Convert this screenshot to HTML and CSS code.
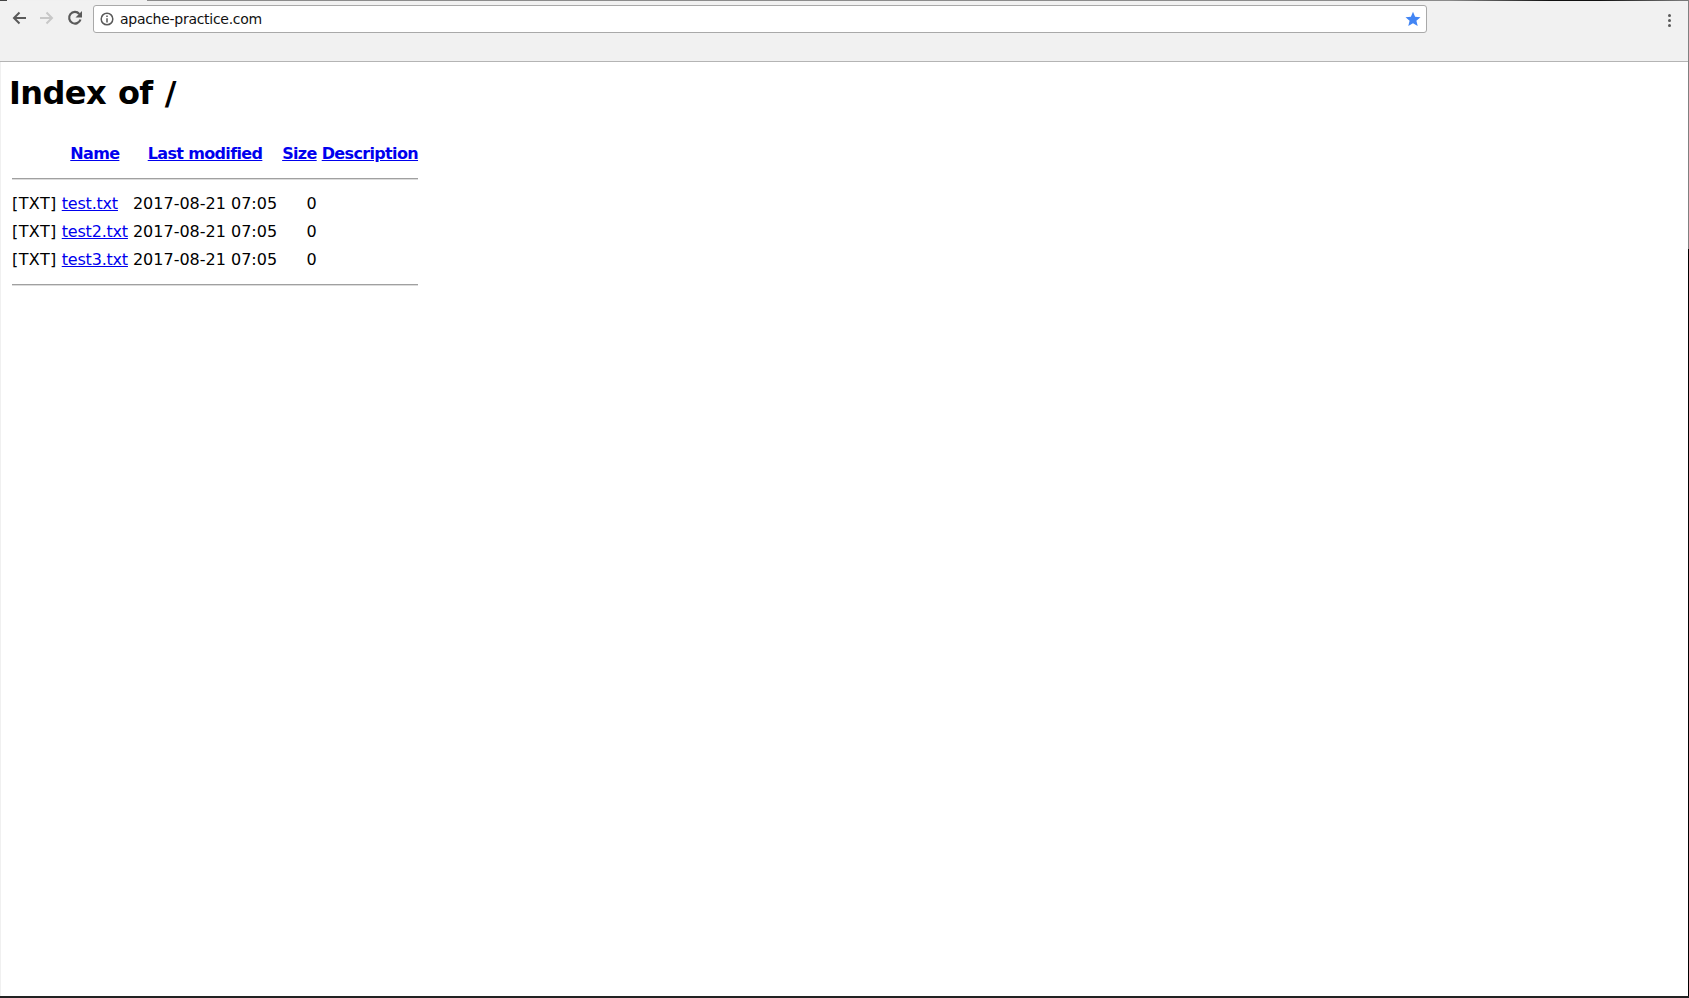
FILE: index.html
```html
<!DOCTYPE html>
<html lang="en">
<head>
    <meta charset="UTF-8">
    <meta name="viewport" content="width=device-width, initial-scale=1.0">
    <title>Index of /</title>
    <link rel="stylesheet" href="styles.css">
</head>
<body>
    <div class="window">
        <div class="top-edge"></div>
        <div class="toolbar">
            <div class="nav-buttons">
                <svg class="nav-icon" viewBox="0 0 16 16"><path d="M15 8H3M8.500 2.500 3 8l5.500 5.500" fill="none" stroke="#5a5a5a" stroke-width="2"/></svg>
                <svg class="nav-icon" viewBox="0 0 16 16"><path d="M1 8h12M7.500 2.500 13 8l-5.500 5.500" fill="none" stroke="#c8c8c8" stroke-width="2"/></svg>
                <svg class="nav-icon" viewBox="0 0 16 16"><path d="M13.500 9.500A5.800 5.800 0 1 1 12.300 3.900" fill="none" stroke="#5a5a5a" stroke-width="2.200"/><path d="M15 1v6.500H8.500z" fill="#5a5a5a"/></svg>
            </div>
            <div class="address-bar">
                <svg class="info-icon" viewBox="0 0 14 14"><circle cx="7" cy="7" r="5.800" fill="none" stroke="#5a5a5a" stroke-width="1.500"/><path d="M7 6.200v4.300M7 3.500v1.500" stroke="#5a5a5a" stroke-width="1.500"/></svg>
                <span class="url">apache-practice.com</span>
                <svg class="star-icon" viewBox="0 0 16 16"><path d="M8 .8l2.100 5 5.400.4-4.100 3.500 1.300 5.300L8 12.200 3.300 15l1.300-5.300L.5 6.200l5.400-.4z" fill="#4285f4"/></svg>
            </div>
            <div class="menu-dots"><span></span><span></span><span></span></div>
        </div>
        <div class="content">
            <h1>Index of /</h1>
            <table>
                <tr class="head-row">
                    <th></th>
                    <th><a href="#">Name</a></th>
                    <th><a href="#">Last modified</a></th>
                    <th><a href="#">Size</a></th>
                    <th><a href="#">Description</a></th>
                </tr>
                <tr><th class="rule" colspan="5"><hr></th></tr>
                <tr>
                    <td class="type">[TXT]</td>
                    <td class="name"><a href="#">test.txt</a></td>
                    <td>2017-08-21 07:05</td>
                    <td class="size">0</td>
                    <td></td>
                </tr>
                <tr>
                    <td class="type">[TXT]</td>
                    <td class="name"><a href="#">test2.txt</a></td>
                    <td>2017-08-21 07:05</td>
                    <td class="size">0</td>
                    <td></td>
                </tr>
                <tr>
                    <td class="type">[TXT]</td>
                    <td class="name"><a href="#">test3.txt</a></td>
                    <td>2017-08-21 07:05</td>
                    <td class="size">0</td>
                    <td></td>
                </tr>
                <tr><th class="rule" colspan="5"><hr></th></tr>
            </table>
        </div>
    </div>
    <div class="taskbar"></div>
</body>
</html>
```

FILE: styles.css
```css
html, body {
    height: 100%;
    margin: 0;
}
body {
    display: flex;
    flex-direction: column;
    overflow: hidden;
    font-family: "DejaVu Sans", Verdana, sans-serif;
    font-size: 16px;
    color: #000;
    background: linear-gradient(#808080 0 249px, #000 249px);
}
.window {
    flex: 1;
    display: flex;
    flex-direction: column;
    min-height: 0;
    margin-right: 1px;
}
.top-edge {
    height: 1px;
    background: linear-gradient(90deg, #444 0 7px, #f0f0f0 7px 147px, #8c8c8c 147px 1450px, #111 1550px 1600px, #777 1680px);
}
.toolbar {
    flex-shrink: 0;
    display: flex;
    align-items: flex-start;
    background: #f1f1f1;
    border-bottom: 1px solid #b4b4b4;
    padding-top: 4px;
    box-sizing: border-box;
    height: 61px;
}
.nav-buttons {
    display: flex;
    gap: 12px;
    padding: 5px 10px 0 11px;
}
.nav-icon {
    width: 16px;
    height: 16px;
}
.address-bar {
    width: 1334px;
    height: 28px;
    box-sizing: border-box;
    display: flex;
    align-items: center;
    background: #fff;
    border: 1px solid #a9a9a9;
    border-radius: 3px;
    padding: 0 5px 0 6px;
}
.info-icon {
    width: 14px;
    height: 14px;
    margin-right: 6px;
}
.url {
    flex: 1;
    font-size: 14px;
    letter-spacing: -0.28px;
    color: #111;
}
.star-icon {
    width: 16px;
    height: 16px;
}
.menu-dots {
    display: flex;
    flex-direction: column;
    gap: 2px;
    margin: 9px 0 0 241px;
}
.menu-dots span {
    width: 3px;
    height: 3px;
    background: #5a5a5a;
    border-radius: 50%;
}
.content {
    flex: 1;
    background: #fff;
    border-left: 1px solid #f0f0f0;
    padding: 0 8px;
}
h1 {
    font-size: 32px;
    line-height: 38px;
    letter-spacing: -0.6px;
    word-spacing: 1.5px;
    margin: 12px 0 27px;
}
table {
    border-spacing: 5px 0;
    margin-left: -2px;
}
th, td {
    padding: 0;
    height: 28px;
}
.head-row th {
    letter-spacing: -0.65px;
}
td {
    text-align: left;
}
.type {
    letter-spacing: 0.4px;
}
.name {
    letter-spacing: -0.2px;
}
.size {
    text-align: right;
}
a {
    color: #0000ee;
}
th.rule {
    height: 22px;
}
hr {
    margin: 2px 0 0;
    border: none;
    border-top: 1px solid #a0a0a0;
    border-bottom: 1px solid #dcdcdc;
}
.taskbar {
    height: 2px;
    flex-shrink: 0;
    background: #222;
}
```
